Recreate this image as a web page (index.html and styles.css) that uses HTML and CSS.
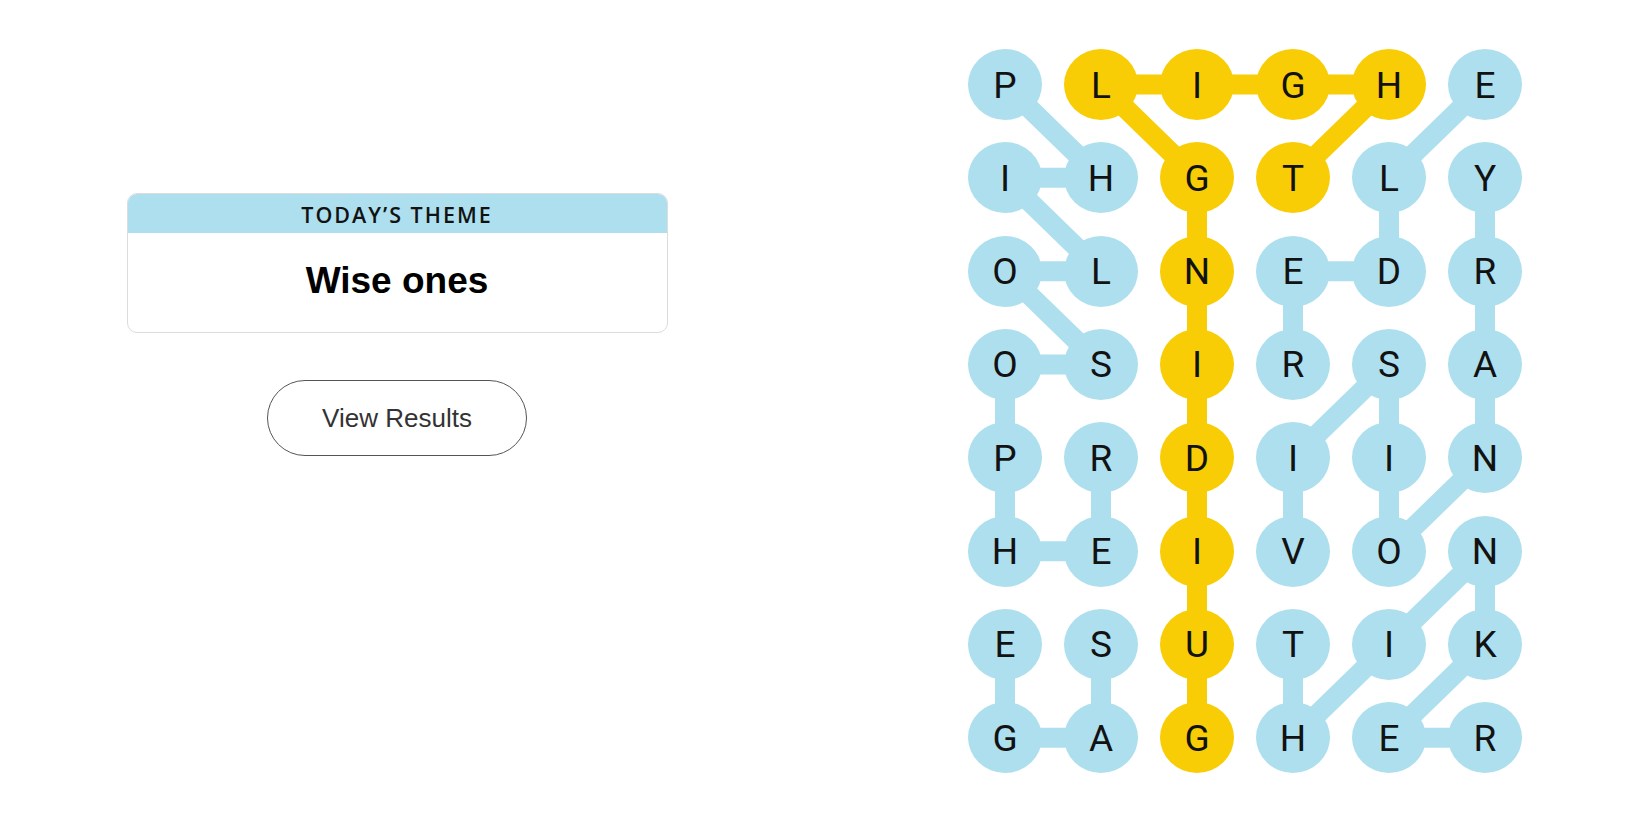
FILE: index.html
```html
<!DOCTYPE html>
<html lang="en">
<head>
<meta charset="utf-8">
<title>Strands</title>
<link rel="stylesheet" href="styles.css">
</head>
<body>
<main class="page">
  <section class="left">
    <div class="theme-card">
      <div class="theme-header">TODAY’S THEME</div>
      <div class="theme-body">Wise ones</div>
    </div>
    <button class="results-btn" type="button">View Results</button>
  </section>
  <section class="board">
    <svg class="links" viewBox="0 0 554 724.3" width="554" height="724.3" aria-hidden="true">
      <g fill="none" stroke="#aedfee" stroke-width="20" stroke-linejoin="round" stroke-linecap="round">
        <polyline points="37,35.5 133,128.8 37,128.8 133,222.2 37,222.2 133,315.5 37,315.5 37,408.8 37,502.2 133,502.2 133,408.8"/>
        <polyline points="133,595.5 133,688.8 37,688.8 37,595.5"/>
        <polyline points="517,35.5 421,128.8 421,222.2 325,222.2 325,315.5"/>
        <polyline points="325,502.2 325,408.8 421,315.5 421,408.8 421,502.2 517,408.8 517,315.5 517,222.2 517,128.8"/>
        <polyline points="325,595.5 325,688.8 421,595.5 517,502.2 517,595.5 421,688.8 517,688.8"/>
      </g>
      <g fill="none" stroke="#f8cd05" stroke-width="20" stroke-linejoin="round" stroke-linecap="round">
        <polyline points="229,688.8 229,128.8 133,35.5 421,35.5 325,128.8"/>
      </g>
    </svg>
    <div class="grid">
      <div class="cell found">P</div><div class="cell span">L</div><div class="cell span">I</div><div class="cell span">G</div><div class="cell span">H</div><div class="cell found">E</div>
      <div class="cell found">I</div><div class="cell found">H</div><div class="cell span">G</div><div class="cell span">T</div><div class="cell found">L</div><div class="cell found">Y</div>
      <div class="cell found">O</div><div class="cell found">L</div><div class="cell span">N</div><div class="cell found">E</div><div class="cell found">D</div><div class="cell found">R</div>
      <div class="cell found">O</div><div class="cell found">S</div><div class="cell span">I</div><div class="cell found">R</div><div class="cell found">S</div><div class="cell found">A</div>
      <div class="cell found">P</div><div class="cell found">R</div><div class="cell span">D</div><div class="cell found">I</div><div class="cell found">I</div><div class="cell found">N</div>
      <div class="cell found">H</div><div class="cell found">E</div><div class="cell span">I</div><div class="cell found">V</div><div class="cell found">O</div><div class="cell found">N</div>
      <div class="cell found">E</div><div class="cell found">S</div><div class="cell span">U</div><div class="cell found">T</div><div class="cell found">I</div><div class="cell found">K</div>
      <div class="cell found">G</div><div class="cell found">A</div><div class="cell span">G</div><div class="cell found">H</div><div class="cell found">E</div><div class="cell found">R</div>
    </div>
  </section>
</main>
</body>
</html>
```
FILE: styles.css
```css
* { box-sizing: border-box; }

html, body {
  margin: 0;
  padding: 0;
  background: #ffffff;
  color: #000000;
  font-family: "Liberation Sans", Arial, sans-serif;
}

.page {
  display: flex;
  align-items: flex-start;
  width: 1650px;
  height: 825px;
  overflow: hidden;
}

.left {
  flex: 0 0 794px;
  display: flex;
  flex-direction: column;
  align-items: center;
  padding-top: 193px;
}

.theme-card {
  width: 541px;
  border: 1px solid #dcdcdc;
  border-radius: 10px;
  overflow: hidden;
  background: #ffffff;
}

.theme-header {
  height: 39px;
  background: #aedfee;
  display: flex;
  align-items: center;
  justify-content: center;
  font-size: 21.5px;
  font-weight: 600;
  font-family: "Open Sans", "Liberation Sans", sans-serif;
  letter-spacing: 2px;
  color: #121212;
  padding-top: 2px;
}

.theme-body {
  height: 99px;
  display: flex;
  align-items: center;
  justify-content: center;
  font-size: 37px;
  font-weight: 700;
  color: #000000;
  padding-bottom: 4px;
}

.results-btn {
  margin-top: 47px;
  width: 260px;
  height: 76px;
  border: 1px solid #555555;
  border-radius: 38px;
  background: #ffffff;
  font-family: "Liberation Sans", Arial, sans-serif;
  font-size: 26px;
  color: #333333;
  padding: 0;
}

.board {
  position: relative;
  margin-left: 174px;
  margin-top: 49px;
  width: 554px;
  height: 724.3px;
}

.links {
  position: absolute;
  left: 0;
  top: 0;
}

.grid {
  position: relative;
  display: grid;
  grid-template-columns: repeat(6, 74px);
  grid-template-rows: repeat(8, 71px);
  column-gap: 22px;
  row-gap: 22.33px;
}

.cell {
  width: 74px;
  height: 71px;
  border-radius: 50%;
  display: flex;
  align-items: center;
  justify-content: center;
  font-family: Roboto, "Liberation Sans", sans-serif;
  font-size: 37px;
  font-weight: 400;
  color: #121212;
  padding-top: 1px;
}

.found { background: #aedfee; }
.span { background: #f8cd05; }
```
